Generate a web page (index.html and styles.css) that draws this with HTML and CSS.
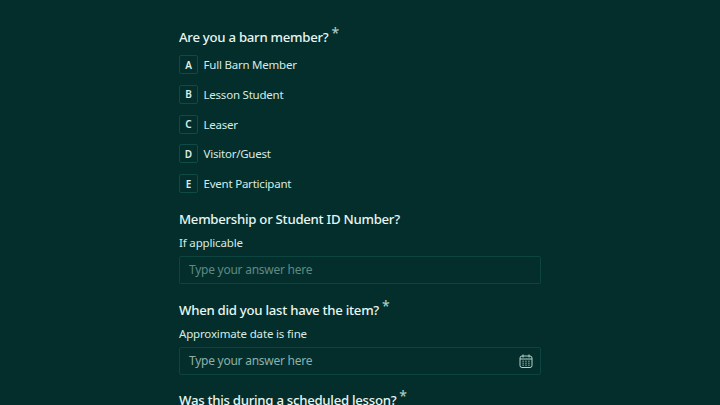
FILE: index.html
```html
<!DOCTYPE html>
<html lang="en">
<head>
<meta charset="utf-8">
<title>Form</title>
<link rel="stylesheet" href="styles.css">
</head>
<body>
<main class="form">
  <section class="q q-first">
    <h2 class="title">Are you a barn member?<span class="req">*</span></h2>
    <ul class="choices">
      <li class="choice"><span class="key">A</span><span class="label">Full Barn Member</span></li>
      <li class="choice"><span class="key">B</span><span class="label">Lesson Student</span></li>
      <li class="choice"><span class="key">C</span><span class="label">Leaser</span></li>
      <li class="choice"><span class="key">D</span><span class="label">Visitor/Guest</span></li>
      <li class="choice"><span class="key">E</span><span class="label">Event Participant</span></li>
    </ul>
  </section>
  <section class="q q-id">
    <h2 class="title">Membership or Student ID Number?</h2>
    <p class="hint">If applicable</p>
    <div class="field"><span class="ph dim">Type your answer here</span></div>
  </section>
  <section class="q q-date">
    <h2 class="title">When did you last have the item?<span class="req">*</span></h2>
    <p class="hint">Approximate date is fine</p>
    <div class="field field-date"><span class="ph">Type your answer here</span>
      <svg class="cal" width="14" height="14" viewBox="0 0 14 14" fill="none" stroke="#b5d3cb" stroke-width="1">
        <rect x="1" y="2" width="12" height="11.5" rx="2"/>
        <path d="M4 .5v3M10 .5v3M1 5h12"/>
        <path d="M3.5 7.2h1.2M6.4 7.2h1.2M9.3 7.2h1.2M3.5 9.2h1.2M6.4 9.2h1.2M9.3 9.2h1.2M3.5 11.2h1.2M6.4 11.2h1.2M9.3 11.2h1.2" stroke-width="1"/>
      </svg>
    </div>
  </section>
  <section class="q q-last">
    <h2 class="title">Was this during a scheduled lesson?<span class="req">*</span></h2>
  </section>
</main>
</body>
</html>
```
FILE: styles.css
```css
* { box-sizing: border-box; }
html, body { margin: 0; padding: 0; height: 405px; overflow: hidden; }
body { background: #032e2b; color: #e6f4ef; font-family: "Noto Sans", Lato, sans-serif; }
.form { width: 362px; margin: 0 auto; padding-top: 27px; display: flex; flex-direction: column; }
.q { display: flex; flex-direction: column; }
.title { margin: 0; font-size: 13.2px; line-height: 20px; font-weight: 500; letter-spacing: -.27px; color: #e8f5f0; }
.req { font-size: 14px; color: #a9c8c0; margin-left: 3px; position: relative; top: -4px; line-height: 1; }
.choices { list-style: none; margin: 8px 0 0; padding: 0; display: flex; flex-direction: column; gap: 10.75px; }
.choice { display: flex; align-items: center; gap: 5.5px; height: 19px; font-size: 11.5px; letter-spacing: -.22px; color: #d6ebe4; }
.key { width: 19px; height: 19px; border: 1px solid #0f4a44; border-radius: 2px; display: flex; align-items: center; justify-content: center; font-size: 10px; font-weight: 600; letter-spacing: 0; color: #dcefe9; }
.q-id { margin-top: 15.5px; }
.q-date { margin-top: 16px; }
.q-last { margin-top: 15px; }
.hint { margin: 5px 0 0; font-size: 11.5px; line-height: 17px; letter-spacing: -.16px; color: #d6ebe4; }
.field { margin-top: 5px; height: 28px; border: 1px solid #0c443f; border-radius: 2px; padding: 0 7px 0 9px; display: flex; align-items: center; justify-content: space-between; }
.ph { font-size: 12px; letter-spacing: -.25px; color: #8fb0a9; }
.ph.dim { color: #5f8a83; }
.cal { flex: none; }
```
